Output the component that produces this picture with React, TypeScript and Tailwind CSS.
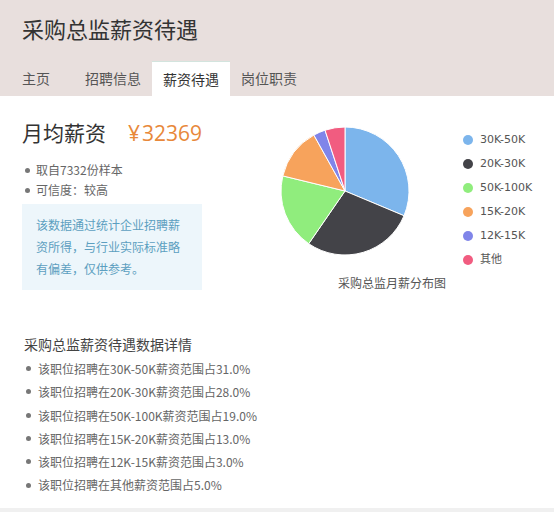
import React from 'react';

const slices = [
  { label: '30K-50K', value: 31, color: '#7cb5ec' },
  { label: '20K-30K', value: 28, color: '#434348' },
  { label: '50K-100K', value: 19, color: '#90ed7d' },
  { label: '15K-20K', value: 13, color: '#f7a35c' },
  { label: '12K-15K', value: 3, color: '#8085e9' },
  { label: '其他', value: 5, color: '#f15c80' },
];

const details = [
  '该职位招聘在30K-50K薪资范围占31.0%',
  '该职位招聘在20K-30K薪资范围占28.0%',
  '该职位招聘在50K-100K薪资范围占19.0%',
  '该职位招聘在15K-20K薪资范围占13.0%',
  '该职位招聘在12K-15K薪资范围占3.0%',
  '该职位招聘在其他薪资范围占5.0%',
];

function Pie() {
  const cx = 65, cy = 65, r = 64;
  const total = slices.reduce((a, s) => a + s.value, 0);
  let acc = 0;
  return (
    <svg width="130" height="130" viewBox="0 0 130 130" className="shrink-0">
      {slices.map((s) => {
        const a0 = (acc / total) * Math.PI * 2 - Math.PI / 2;
        acc += s.value;
        const a1 = (acc / total) * Math.PI * 2 - Math.PI / 2;
        const x0 = cx + r * Math.cos(a0), y0 = cy + r * Math.sin(a0);
        const x1 = cx + r * Math.cos(a1), y1 = cy + r * Math.sin(a1);
        const large = a1 - a0 > Math.PI ? 1 : 0;
        return (
          <path
            key={s.label}
            d={`M${cx},${cy} L${x0},${y0} A${r},${r} 0 ${large} 1 ${x1},${y1} Z`}
            fill={s.color}
            stroke="#ffffff"
            strokeWidth="1"
            strokeLinejoin="round"
          />
        );
      })}
    </svg>
  );
}

export default function App() {
  const font = "font-['Noto_Sans_CJK_SC',sans-serif]";
  return (
    <div className={`w-[554px] h-[512px] bg-white overflow-hidden flex flex-col ${font}`}>
      {/* header */}
      <div className="bg-[#e8dfdd] h-[96px] shrink-0 flex flex-col">
        <h1 className="pl-[22px] pt-[13px] text-[22px] leading-[30px] text-[#333] font-normal">采购总监薪资待遇</h1>
        <div className="mt-auto flex items-end pl-[11px] text-[14px] text-[#555]">
          <div className="h-[35px] px-[11px] mr-[13px] flex items-center">主页</div>
          <div className="h-[35px] px-[11px] flex items-center">招聘信息</div>
          <div className="h-[35px] px-[11px] flex items-center bg-white border-t border-[#d3e4de] text-[#333] whitespace-nowrap">薪资待遇</div>
          <div className="h-[35px] px-[11px] flex items-center">岗位职责</div>
        </div>
      </div>

      {/* body */}
      <div className="flex-1 pl-[22px] pt-[21px]">
        <div className="flex">
          <div className="w-[258px] shrink-0">
            <div className="flex items-baseline h-[30px]">
              <span className="text-[21px] leading-[30px] text-[#333]">月均薪资</span>
              <span className="ml-[22px] text-[21px] leading-[30px] text-[#e8883a] font-['Open_Sans',sans-serif]">
                ¥<span className="ml-[2px]">32369</span>
              </span>
            </div>
            <ul className="mt-[13px] text-[12px] leading-[20px] text-[#666]">
              <li className="flex items-center">
                <span className="w-[5px] h-[5px] rounded-full bg-[#777] ml-[3px] mr-[6px]" />取自7332份样本
              </li>
              <li className="flex items-center">
                <span className="w-[5px] h-[5px] rounded-full bg-[#777] ml-[3px] mr-[6px]" />可信度：较高
              </li>
            </ul>
            <div className="mt-[4px] w-[180px] bg-[#edf6fb] pl-[14px] pr-[16px] py-[10px] text-[12px] leading-[22px] text-[#5c9fc0]">
              该数据通过统计企业招聘薪资所得，与行业实际标准略有偏差，仅供参考。
            </div>
          </div>

          <div className="flex flex-col pt-[9px]">
            <div className="flex items-start">
              <Pie />
              <ul className="ml-[53px] mt-[2px] text-[11px] text-[#555] font-['DejaVu_Sans','Noto_Sans_CJK_SC',sans-serif]">
                {slices.map((s) => (
                  <li key={s.label} className="h-[24px] flex items-center whitespace-nowrap">
                    <span className="w-[10px] h-[10px] rounded-full mr-[7px]" style={{ backgroundColor: s.color }} />
                    {s.label}
                  </li>
                ))}
              </ul>
            </div>
            <div className="ml-[58px] mt-[3px] text-[12px] leading-[16px] text-[#555]">采购总监月薪分布图</div>
          </div>
        </div>

        <h2 className="mt-[42px] text-[14px] leading-[22px] text-[#444] font-normal pl-[2px]">采购总监薪资待遇数据详情</h2>
        <ul className="mt-[2px] text-[12px] leading-[23.3px] text-[#666]">
          {details.map((d) => (
            <li key={d} className="flex items-center">
              <span className="w-[5px] h-[5px] rounded-full bg-[#777] ml-[4px] mr-[7px]" />
              {d}
            </li>
          ))}
        </ul>
      </div>
      <div className="h-[4px] shrink-0 bg-[#f0f0f0]" />
    </div>
  );
}
